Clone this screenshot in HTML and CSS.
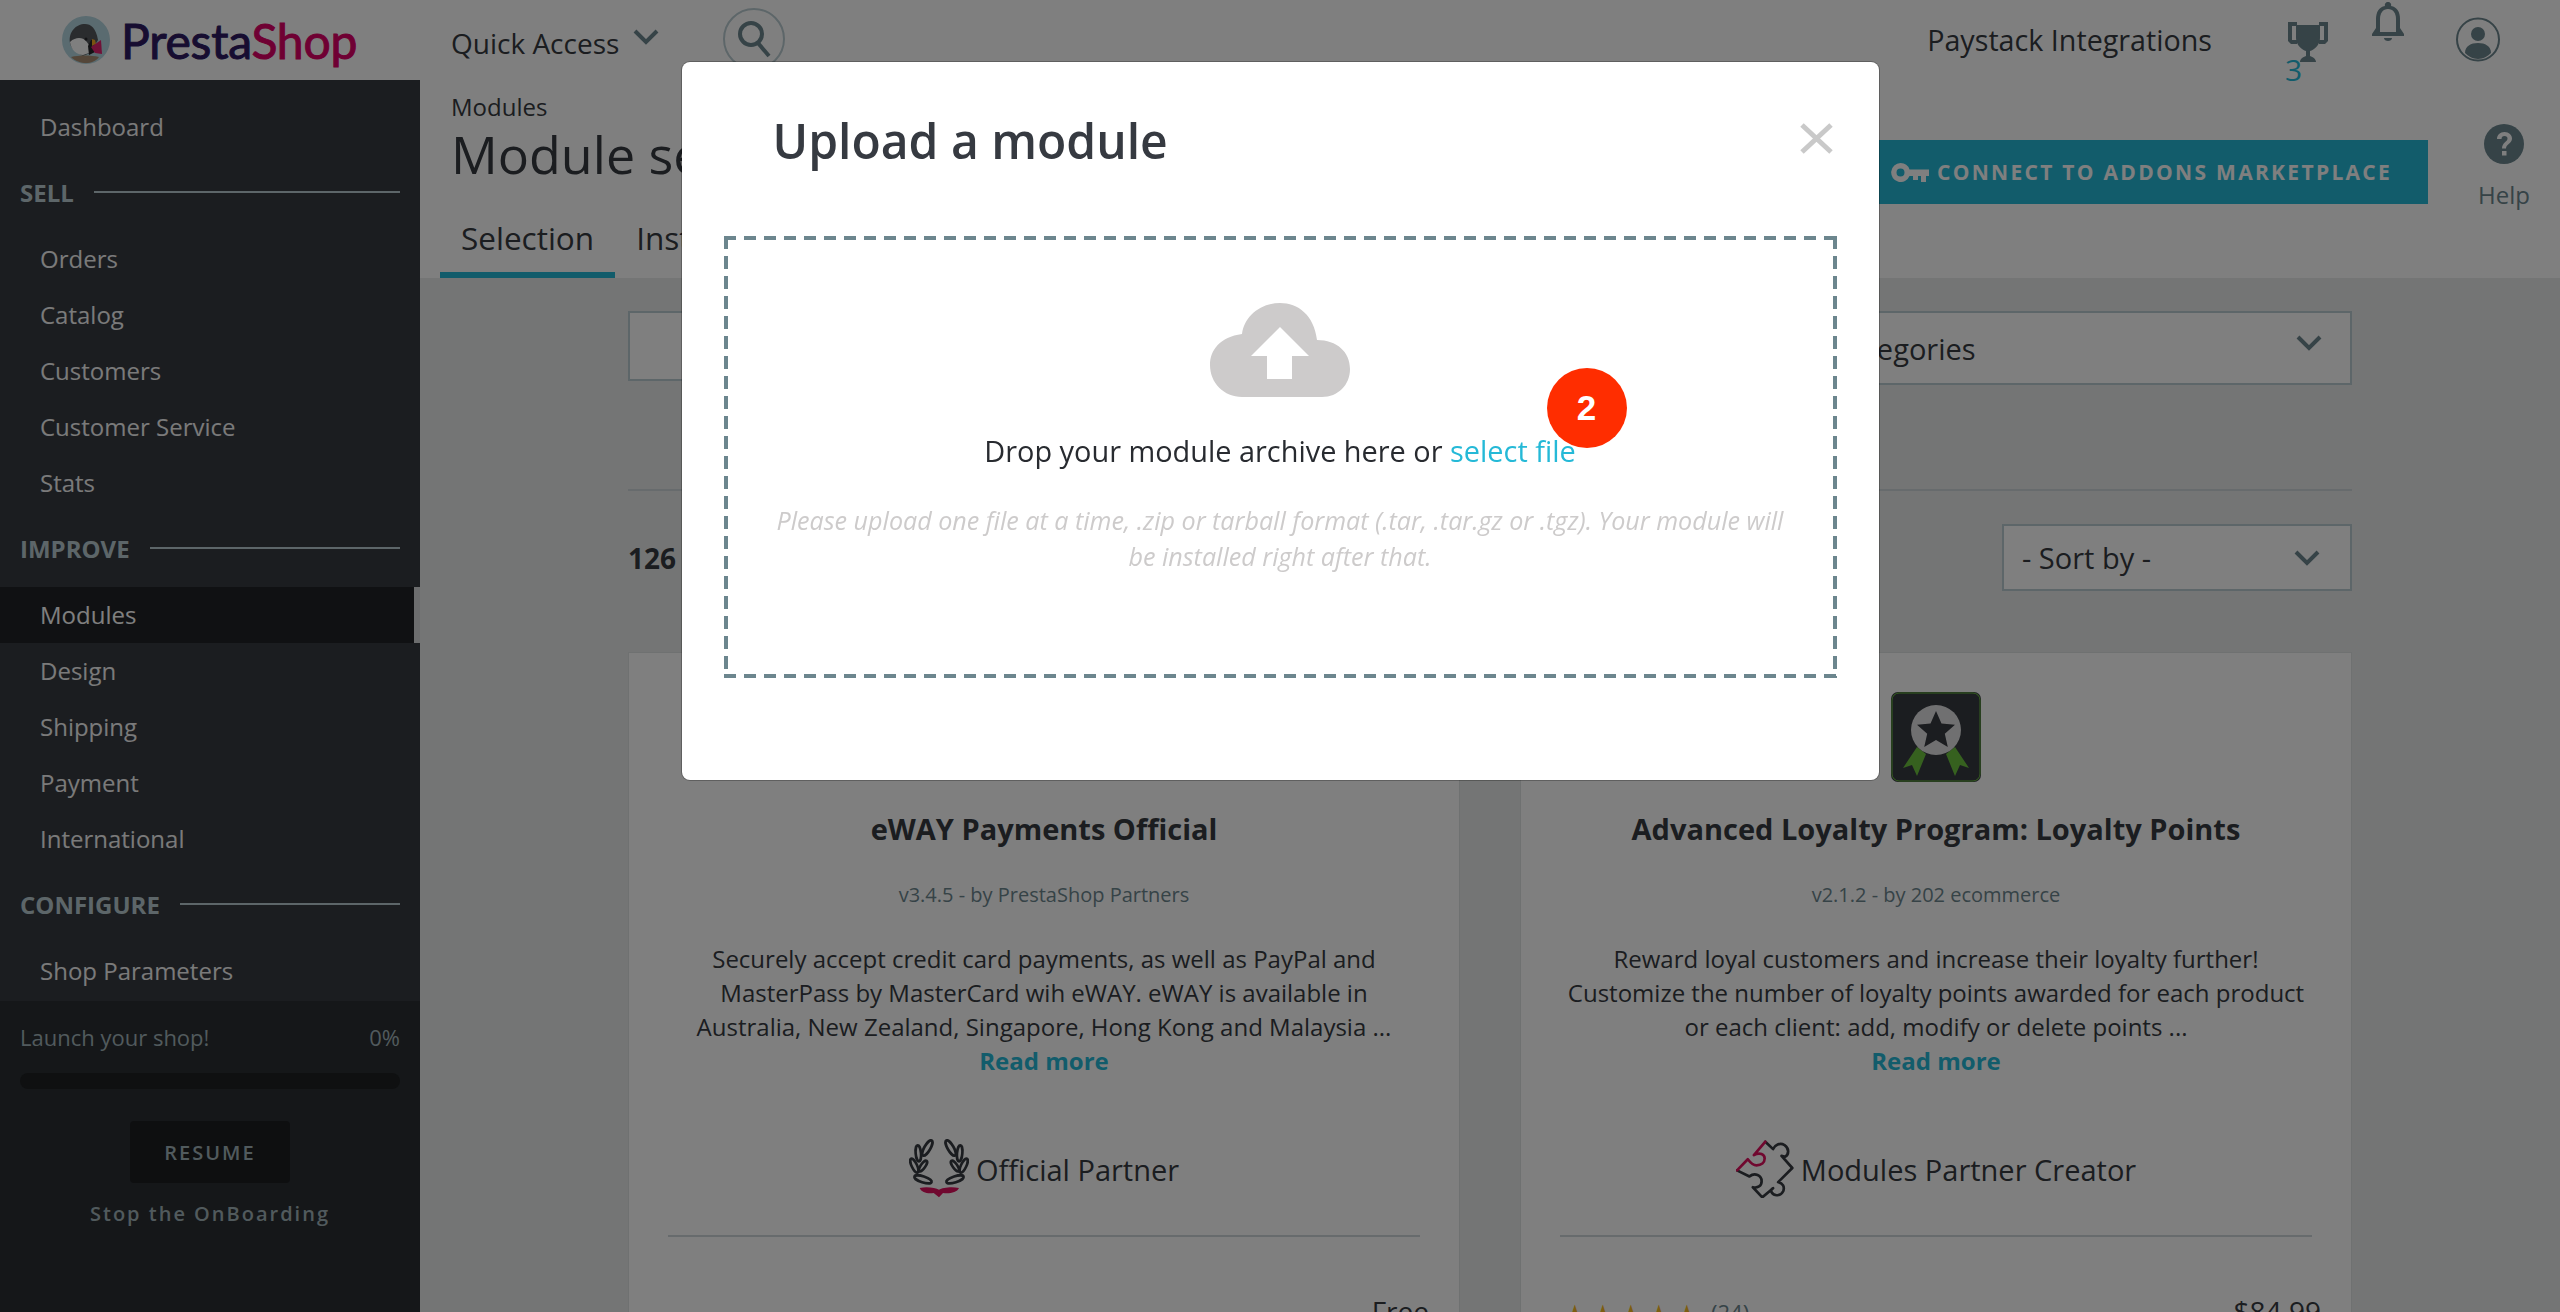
FILE: index.html
```html
<!DOCTYPE html>
<html lang="en">

<head>
    <meta charset="UTF-8">
    <title>Module selection - PrestaShop</title>
    <link rel="stylesheet" href="styles.css">
</head>

<body>
    <header class="topbar">
        <div class="logo">
            <svg class="logo-mark" viewBox="0 0 48 48" width="48" height="48">
                <circle cx="24" cy="24" r="24" fill="#b4d6e0" />
                <path d="M8 27C6 16 14 8 23 8c6 0 11 4 13 16l-8 13-7 3C14 36 9 33 8 27z" fill="#55585c" />
                <path d="M8 26c3-3 6-4 9-4 6 0 9 5 11 9l-1 6-6 2c-6 0-12-5-13-13z" fill="#fff" />
                <circle cx="24" cy="23" r="1.500" fill="#24262a" />
                <path d="M26 30l3-6 3 0 1 12-6 3z" fill="#24262a" />
                <path d="M30 23l3 1 1 4-4 2z" fill="#f5a623" />
                <path d="M29 31l10-7 1 14-7-1z" fill="#e0236f" />
                <path d="M9 41c8-2 20-2 28 0-3 4-8 6-13 6s-11-2-15-6z" fill="#a88d72" />
            </svg>
            <span class="logo-text"><span class="logo-presta">Presta</span><span class="logo-shop">Shop</span></span>
        </div>
        <div class="quick-access">
            <span>Quick Access</span>
            <svg class="chevron" viewBox="0 0 26 16" width="26" height="16">
                <path d="M2 2l11 11L24 2" />
            </svg>
        </div>
        <div class="search-circle">
            <svg viewBox="0 0 36 40" width="36" height="40" fill="none" stroke="#6c868e" stroke-width="4">
                <circle cx="15" cy="15" r="11" />
                <path d="M22 24l11 13" />
            </svg>
        </div>
        <div class="shop-name">Paystack Integrations</div>
        <div class="trophy">
            <svg viewBox="0 0 40 40" width="40" height="40" fill="#6c868e">
                <path d="M0 0h9v4H4v14h5v4H3l-3-3zM40 0h-9v4h5v14h-5v4h6l3-3z" />
                <path d="M8 3h24v13c0 7-6 12-10 13v5c3 1 6 3 6 6H12c0-3 3-5 6-6v-5C14 28 8 23 8 16z" />
            </svg>
            <span class="trophy-count">3</span>
        </div>
        <div class="bell">
            <svg viewBox="0 0 32 39" width="32" height="39">
                <path d="M16 0a3 3 0 0 1 3 4c6 1 9 6 9 13v9l4 6v2H0v-2l4-6v-9c0-7 3-12 9-13a3 3 0 0 1 3-4z" fill="#6c868e" />
                <path d="M8 30V17c0-6 3-10 8-10s8 4 8 10v13z" fill="#fff" />
                <path d="M12 36h8c0 2-2 3-4 3s-4-1-4-3z" fill="#6c868e" />
            </svg>
        </div>
        <div class="user-icon">
            <svg viewBox="0 0 44 45" width="44" height="45">
                <circle cx="22" cy="22.500" r="21" fill="none" stroke="#6c868e" stroke-width="2" />
                <circle cx="22" cy="17" r="7" fill="#6c868e" />
                <path d="M9 36c0-7 6-10 13-10s13 3 13 10c-3 3-8 6-13 6S12 39 9 36z" fill="#6c868e" />
            </svg>
        </div>
    </header>

    <div class="main">
        <nav class="sidebar">
            <div class="nav-list">
                <a class="nav-item">Dashboard</a>
                <div class="nav-section"><span>SELL</span></div>
                <a class="nav-item">Orders</a>
                <a class="nav-item">Catalog</a>
                <a class="nav-item">Customers</a>
                <a class="nav-item">Customer Service</a>
                <a class="nav-item">Stats</a>
                <div class="nav-section"><span>IMPROVE</span></div>
                <a class="nav-item active">Modules</a>
                <a class="nav-item">Design</a>
                <a class="nav-item">Shipping</a>
                <a class="nav-item">Payment</a>
                <a class="nav-item">International</a>
                <div class="nav-section"><span>CONFIGURE</span></div>
                <a class="nav-item">Shop Parameters</a>
            </div>
            <div class="onboarding">
                <div class="onboarding-top"><span>Launch your shop!</span><span>0%</span></div>
                <div class="progress"></div>
                <button class="resume">RESUME</button>
                <div class="stop-link">Stop the OnBoarding</div>
            </div>
        </nav>

        <div class="content">
            <div class="page-head">
                <div class="head-left">
                    <div class="breadcrumb">Modules</div>
                    <h1 class="page-title">Module selection</h1>
                    <div class="tabs">
                        <a class="tab active">Selection</a>
                        <a class="tab">Installed modules</a>
                    </div>
                </div>
                <div class="head-actions">
                    <button class="connect">
                        <svg viewBox="0 0 38 19" width="38" height="19" fill="#fff">
                            <path d="M9.500 0a9.500 9.500 0 0 1 9 6.500H38V13h-3v6h-5v-6h-3v4h-5v-4h-3.500a9.500 9.500 0 1 1-9-13zm0 5.500a4 4 0 1 0 0 8 4 4 0 0 0 0-8z" />
                        </svg>
                        CONNECT TO ADDONS MARKETPLACE
                    </button>
                    <div class="help">
                        <svg viewBox="0 0 40 40" width="40" height="40">
                            <circle cx="20" cy="20" r="20" fill="#6c868e" />
                            <path d="M13 15c0-4 3-7 7.500-7s7.500 3 7.500 6.500c0 5-6 5.500-6 10h-4c0-6 5.500-6.500 5.500-10 0-1.500-1-2.500-3-2.500s-3 1.200-3 3zM18 27h4.500v4.500H18z" fill="#fff" />
                        </svg>
                        <span>Help</span>
                    </div>
                </div>
            </div>

            <div class="page-body">
                <div class="filters">
                    <div class="search-input"></div>
                    <div class="select category-select">
                        <span>All categories</span>
                        <svg class="chevron" viewBox="0 0 26 16" width="26" height="16">
                            <path d="M2 2l11 11L24 2" />
                        </svg>
                    </div>
                </div>
                <hr class="filters-rule">
                <div class="count-row">
                    <strong class="count">126 modules</strong>
                    <div class="select sort-select">
                        <span>- Sort by -</span>
                        <svg class="chevron" viewBox="0 0 26 16" width="26" height="16">
                            <path d="M2 2l11 11L24 2" />
                        </svg>
                    </div>
                </div>

                <div class="cards">
                    <article class="card">
                        <div class="card-thumb"></div>
                        <h2 class="card-title">eWAY Payments Official</h2>
                        <div class="card-version">v3.4.5 - by PrestaShop Partners</div>
                        <p class="card-desc">Securely accept credit card payments, as well as PayPal and<br>MasterPass by MasterCard wih eWAY. eWAY is available in<br>Australia, New Zealand, Singapore, Hong Kong and Malaysia ...<br><a class="read-more">Read more</a></p>
                        <div class="card-badge">
                            <svg viewBox="30 25 180 180" width="60" height="60">
                                <g fill="none" stroke="#363a41" stroke-width="8">
                                    <ellipse cx="85" cy="52" rx="26" ry="9" transform="rotate(-60 85 52)" />
                                    <ellipse cx="58" cy="68" rx="24" ry="8" transform="rotate(85 58 68)" />
                                    <ellipse cx="46" cy="105" rx="23" ry="8" transform="rotate(65 46 105)" />
                                    <ellipse cx="72" cy="106" rx="19" ry="7" transform="rotate(-55 72 106)" />
                                    <ellipse cx="72" cy="146" rx="27" ry="9" transform="rotate(18 72 146)" />
                                </g>
                                <g fill="none" stroke="#363a41" stroke-width="8" transform="matrix(-1 0 0 1 240 0)">
                                    <ellipse cx="85" cy="52" rx="26" ry="9" transform="rotate(-60 85 52)" />
                                    <ellipse cx="58" cy="68" rx="24" ry="8" transform="rotate(85 58 68)" />
                                    <ellipse cx="46" cy="105" rx="23" ry="8" transform="rotate(65 46 105)" />
                                    <ellipse cx="72" cy="106" rx="19" ry="7" transform="rotate(-55 72 106)" />
                                    <ellipse cx="72" cy="146" rx="27" ry="9" transform="rotate(18 72 146)" />
                                </g>
                                <path d="M62 172c23-5 48 0 58 5 10-5 35-10 60-5-6 14-30 18-48 15l-12 13-16-13c-18 3-36-1-42-15z" fill="#e0115f" />
                            </svg>
                            <span>Official Partner</span>
                        </div>
                        <hr class="card-rule">
                        <div class="card-foot">
                            <span></span>
                            <span class="price">Free</span>
                        </div>
                    </article>

                    <article class="card">
                        <div class="card-thumb medal">
                            <svg viewBox="0 0 90 90" width="90" height="90">
                                <rect width="90" height="90" rx="7" fill="#363a41" />
                                <rect x="1" y="1" width="88" height="88" rx="7" fill="none" stroke="#6dc23f" stroke-width="1" />
                                <path d="M26 55L12 76l9-3 5 11 9-22zM64 55l14 21-9-3-5 11-9-22z" fill="#6dc23f" />
                                <circle cx="45" cy="38" r="25" fill="#fff" opacity=".85" />
                                <path d="M45 19l5.500 12.500 13.500 1.200-10.200 9 3 13.300L45 48l-11.800 7 3-13.300-10.200-9 13.500-1.200z" fill="#363a41" />
                            </svg>
                        </div>
                        <h2 class="card-title">Advanced Loyalty Program: Loyalty Points</h2>
                        <div class="card-version">v2.1.2 - by 202 ecommerce</div>
                        <p class="card-desc">Reward loyal customers and increase their loyalty further!<br>Customize the number of loyalty points awarded for each product<br>or each client: add, modify or delete points ...<br><a class="read-more">Read more</a></p>
                        <div class="card-badge">
                            <svg viewBox="25 25 172 172" width="58" height="58" fill="none" stroke-width="8" stroke-linejoin="round" stroke-linecap="round">
                                <path d="M112 30l23 22c5-12 20-20 34-12 14 9 14 28 1 35l-10-3 32 36-42 42c14 3 20 14 15 27-7 14-26 16-34 4-3-5-2-11 4-13l-32 27-28-30c14 3 26-3 26-18 0-17-20-27-36-14L28 115" stroke="#363a41" />
                                <path d="M28 115l32-33c6 8 14 18 26 18 14 0 24-8 24-20 0-12-14-20-32-10l34-40" stroke="#e0115f" />
                            </svg>
                            <span>Modules Partner Creator</span>
                        </div>
                        <hr class="card-rule">
                        <div class="card-foot">
                            <span class="rating"><span class="stars">★★★★★</span><span class="rating-count">(24)</span></span>
                            <span class="price">$84.99</span>
                        </div>
                    </article>
                </div>
            </div>
        </div>
    </div>

    <div class="backdrop">
        <div class="modal">
            <div class="modal-head">
                <h3 class="modal-title">Upload a module</h3>
                <svg class="modal-close" viewBox="0 0 33 31" width="33" height="31">
                    <path d="M2 2l29 27M31 2L2 29" />
                </svg>
            </div>
            <div class="dropzone">
                <svg class="cloud" viewBox="0 0 140 94" width="140" height="94">
                    <path d="M32 94C14 94 0 80 0 62c0-15 10-28 32-31C34 14 50 0 70 0c18 0 34 12 37 37 20 0 33 12 33 29 0 16-12 28-28 28z" fill="#cdcbcb" />
                    <path d="M70 24l29 29H82v23H57V53H41z" fill="#fff" />
                </svg>
                <p class="drop-text">Drop your module archive here or <a class="select-file">select file</a></p>
                <p class="drop-help">Please upload one file at a time, .zip or tarball format (.tar, .tar.gz or .tgz). Your module will be installed right after that.</p>
            </div>
            <span class="step-badge">2</span>
        </div>
    </div>
</body>

</html>
```

FILE: styles.css
```css
* {
    box-sizing: border-box;
}

:root {
    --teal: #25b9d7;
    --slate: #6c868e;
    --ink: #363a41;
}

body {
    margin: 0;
    height: 1312px;
    overflow: hidden;
    font-family: "Open Sans", "Noto Sans", sans-serif;
    color: var(--ink);
    background-color: #e9ebea;
}

/* Top bar */
.topbar {
    display: flex;
    align-items: center;
    height: 80px;
    background-color: #fff;
}

.logo {
    display: flex;
    align-items: center;
    width: 451px;
    padding-left: 62px;
}

.logo-mark {
    flex: none;
}

.logo-text {
    margin-left: 11px;
    font-family: Lato, sans-serif;
    font-size: 48px;
    font-weight: 400;
    letter-spacing: -0.2px;
    -webkit-text-stroke: 1px;
}

.logo-presta {
    color: #2e1a62;
}

.logo-shop {
    color: #df0067;
}

.quick-access {
    display: flex;
    align-items: center;
    font-size: 28px;
    padding-top: 6px;
}

.chevron {
    fill: none;
    stroke: var(--slate);
    stroke-width: 4;
}

.quick-access .chevron {
    margin: -12px 0 0 14px;
}

.search-circle {
    display: flex;
    align-items: center;
    justify-content: center;
    width: 62px;
    height: 62px;
    margin: -2px 0 0 64px;
    border: 2px solid #bbcdd2;
    border-radius: 50%;
}

.shop-name {
    margin: -2px 0 0 auto;
    font-size: 28.700px;
}

.trophy {
    position: relative;
    width: 40px;
    height: 40px;
    margin: 4px 0 0 76px;
}

.trophy-count {
    position: absolute;
    left: -3px;
    top: 27px;
    font-size: 30px;
    color: var(--teal);
}

.bell {
    height: 39px;
    margin: -37px 0 0 44px;
}

.user-icon {
    height: 45px;
    margin: -2px 60px 0 52px;
}

/* Layout under the bar */
.main {
    display: flex;
    height: 1232px;
}

.sidebar {
    display: flex;
    flex-direction: column;
    flex: none;
    width: 420px;
    background-color: #363a41;
    color: #f5f5f5;
}

.nav-list {
    padding-top: 19px;
}

.nav-item {
    display: block;
    height: 56px;
    padding-left: 40px;
    font-size: 24px;
    line-height: 56px;
}

.nav-item.active {
    margin-top: 11px;
    background-color: #202226;
    color: #fff;
    border-right: 6px solid #d8dadc;
}

.nav-section + .nav-item {
    margin-top: 10px;
}

.nav-section {
    display: flex;
    align-items: center;
    height: 56px;
    margin-top: 10px;
    padding: 0 20px 2px;
    font-size: 24px;
    font-weight: 700;
    color: #bbcdd2;
}

.nav-section::after {
    content: "";
    flex: 1;
    height: 2px;
    margin-left: 20px;
    background-color: #bbcdd2;
}

.onboarding {
    display: flex;
    flex-direction: column;
    flex: 1;
    margin-top: 2px;
    padding: 20px 20px 0;
    background-color: #2a2e32;
    color: #a3b5ba;
    font-size: 22px;
}

.onboarding-top {
    display: flex;
    justify-content: space-between;
    line-height: 32px;
}

.progress {
    height: 16px;
    margin-top: 20px;
    border-radius: 8px;
    background-color: #1e2022;
}

.resume {
    align-self: center;
    width: 160px;
    height: 62px;
    margin-top: 32px;
    border: none;
    border-radius: 4px;
    background-color: #1c1e21;
    color: #a3b5ba;
    font-family: inherit;
    font-size: 20px;
    font-weight: 600;
    letter-spacing: 2px;
}

.stop-link {
    margin-top: 15px;
    text-align: center;
    font-size: 20px;
    font-weight: 600;
    line-height: 32px;
    letter-spacing: 2px;
}

/* Page header */
.content {
    flex: 1;
    min-width: 0;
}

.page-head {
    display: flex;
    justify-content: space-between;
    height: 198px;
    padding: 15px 30px 0 31px;
    background-color: #fff;
}

.head-left {
    display: flex;
    flex-direction: column;
}

.breadcrumb {
    font-size: 24px;
    line-height: 24px;
}

.page-title {
    margin: 5px 0 0;
    font-size: 52px;
    font-weight: 400;
    line-height: 60px;
}

.tabs {
    display: flex;
    margin: auto 0 0 -11px;
}

.tab {
    height: 57px;
    padding: 0 21px;
    font-size: 31.500px;
    line-height: 34px;
}

.tab.active {
    border-bottom: 6px solid var(--teal);
}

.head-actions {
    display: flex;
    align-items: flex-start;
}

.connect {
    display: flex;
    align-items: center;
    gap: 8px;
    height: 64px;
    margin-top: 45px;
    padding: 0 36px;
    border: none;
    background-color: var(--teal);
    color: #fff;
    font-family: inherit;
    font-size: 21px;
    font-weight: 700;
    letter-spacing: 2.300px;
    white-space: nowrap;
}

.help {
    display: flex;
    flex-direction: column;
    align-items: center;
    margin: 29px 0 0 50px;
    font-size: 24px;
    color: var(--slate);
}

.help span {
    margin-top: 14px;
}

/* Page body */
.page-body {
    height: 1034px;
    overflow: hidden;
    padding: 33px 208px 0;
}

.filters {
    display: flex;
    justify-content: space-between;
}

.search-input {
    width: 800px;
    height: 70px;
    border: 2px solid #bbcdd2;
    background-color: #fff;
}

.select {
    display: flex;
    align-items: center;
    justify-content: space-between;
    border: 2px solid #bbcdd2;
    background-color: #fff;
    font-size: 29px;
}

.category-select {
    width: 592px;
    height: 74px;
    padding: 0 28px 0 34px;
}

.category-select .chevron {
    margin-top: -10px;
}

.filters-rule {
    height: 2px;
    margin: 104px 0 0;
    border: none;
    background-color: #ced6da;
}

.count-row {
    display: flex;
    align-items: center;
    justify-content: space-between;
    margin-top: 33px;
}

.count {
    font-size: 28px;
}

.sort-select {
    width: 350px;
    height: 67px;
    padding: 0 30px 0 18px;
}

.cards {
    display: grid;
    grid-template-columns: 832px 832px;
    column-gap: 60px;
    margin-top: 61px;
}

.card {
    padding-top: 39px;
    border: 1px solid #dfe2e2;
    background-color: #fff;
    text-align: center;
}

.card-thumb {
    height: 90px;
}

.card-title {
    margin: 27px 0 0;
    font-size: 29px;
    font-weight: 700;
    line-height: 40px;
}

.card-version {
    margin-top: 31px;
    font-size: 20px;
    line-height: 30px;
    color: var(--slate);
}

.card-desc {
    margin: 32px 0 0;
    font-size: 24px;
    line-height: 34px;
    white-space: nowrap;
}

.read-more {
    font-weight: 700;
    color: var(--teal);
}

.card-badge {
    display: flex;
    align-items: center;
    justify-content: center;
    gap: 7px;
    height: 60px;
    margin-top: 61px;
    font-size: 29px;
}

.card-rule {
    height: 2px;
    margin: 36px 39px 0;
    border: none;
    background-color: #ced6da;
}

.card-foot {
    display: flex;
    align-items: flex-start;
    justify-content: space-between;
    padding: 55px 30px 0 40px;
    font-size: 28px;
}

.rating {
    display: flex;
    align-items: flex-start;
    gap: 10px;
    font-size: 22px;
    color: var(--slate);
}

.rating-count {
    margin-top: 5px;
}

.stars {
    margin-top: 8px;
    font-size: 31px;
    line-height: 1;
    color: #fbbb22;
}

/* Upload dialog */
.backdrop {
    position: fixed;
    inset: 0;
    display: flex;
    justify-content: center;
    padding-top: 62px;
    background-color: rgba(0, 0, 0, 0.5);
}

.modal {
    position: relative;
    width: 1197px;
    height: 718px;
    padding: 0 42px;
    border-radius: 8px;
    background-color: #fff;
    box-shadow: 0 0 0 1px rgba(0, 0, 0, 0.25);
}

.modal-head {
    display: flex;
    align-items: center;
    justify-content: space-between;
    height: 174px;
    padding: 0 4px 18px 49px;
}

.modal-title {
    margin: 0;
    font-size: 48px;
    font-weight: 600;
    color: var(--ink);
}

.modal-close {
    margin-top: -4px;
    fill: none;
    stroke: #c9c9c9;
    stroke-width: 5;
}

.dropzone {
    display: flex;
    flex-direction: column;
    align-items: center;
    height: 442px;
    padding: 67px 40px 0;
    background-image:
        repeating-linear-gradient(90deg, var(--slate) 0 12px, transparent 12px 20px),
        repeating-linear-gradient(90deg, var(--slate) 0 12px, transparent 12px 20px),
        repeating-linear-gradient(180deg, var(--slate) 0 13px, transparent 13px 20px),
        repeating-linear-gradient(180deg, var(--slate) 0 13px, transparent 13px 20px);
    background-size: 100% 4px, 100% 4px, 4px 100%, 4px 100%;
    background-position: left top, left bottom, left top, right top;
    background-repeat: no-repeat;
}

.cloud {
    flex: none;
}

.drop-text {
    margin: 32px 0 0;
    font-size: 28.900px;
    line-height: 44px;
    color: #282b30;
}

.select-file {
    color: var(--teal);
}

.drop-help {
    margin: 29px 0 0;
    width: 1030px;
    text-align: center;
    font-size: 25.100px;
    font-style: italic;
    line-height: 36px;
    color: #cdcbcb;
}

.step-badge {
    position: absolute;
    left: 865px;
    top: 306px;
    width: 80px;
    height: 80px;
    border-radius: 50%;
    background-color: #ff2d00;
    color: #fff;
    font-family: "Liberation Sans", Arial, sans-serif;
    font-size: 35px;
    font-weight: 700;
    line-height: 80px;
    text-align: center;
}
```
